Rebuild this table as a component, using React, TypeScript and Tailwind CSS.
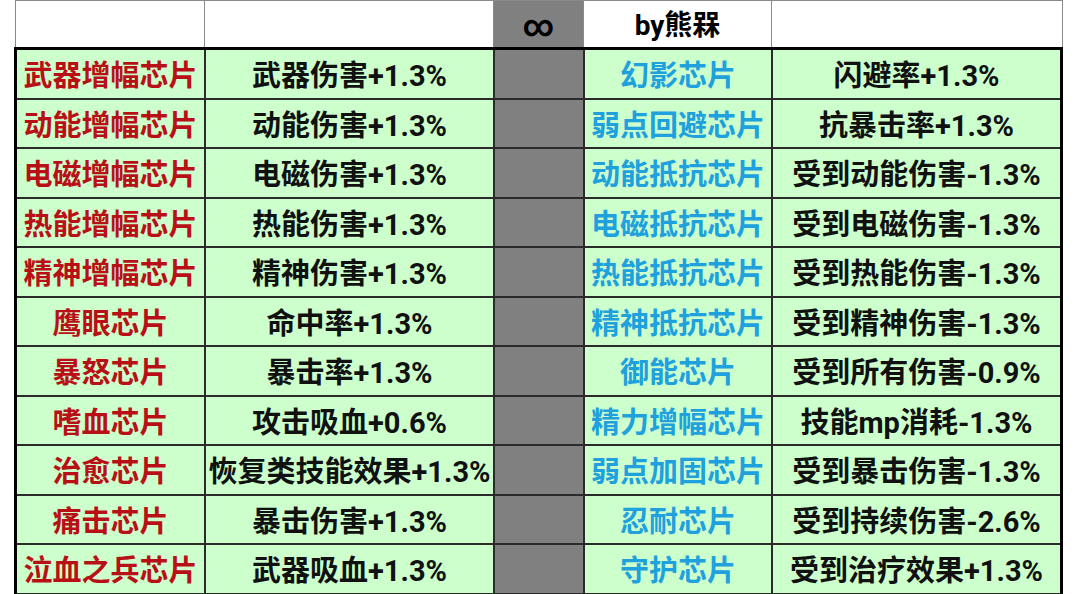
import React from "react";

const rows: [string, string, string, string][] = [
  ["武器增幅芯片", "武器伤害+1.3%", "幻影芯片", "闪避率+1.3%"],
  ["动能增幅芯片", "动能伤害+1.3%", "弱点回避芯片", "抗暴击率+1.3%"],
  ["电磁增幅芯片", "电磁伤害+1.3%", "动能抵抗芯片", "受到动能伤害-1.3%"],
  ["热能增幅芯片", "热能伤害+1.3%", "电磁抵抗芯片", "受到电磁伤害-1.3%"],
  ["精神增幅芯片", "精神伤害+1.3%", "热能抵抗芯片", "受到热能伤害-1.3%"],
  ["鹰眼芯片", "命中率+1.3%", "精神抵抗芯片", "受到精神伤害-1.3%"],
  ["暴怒芯片", "暴击率+1.3%", "御能芯片", "受到所有伤害-0.9%"],
  ["嗜血芯片", "攻击吸血+0.6%", "精力增幅芯片", "技能mp消耗-1.3%"],
  ["治愈芯片", "恢复类技能效果+1.3%", "弱点加固芯片", "受到暴击伤害-1.3%"],
  ["痛击芯片", "暴击伤害+1.3%", "忍耐芯片", "受到持续伤害-2.6%"],
  ["泣血之兵芯片", "武器吸血+1.3%", "守护芯片", "受到治疗效果+1.3%"],
];

const font = { fontFamily: 'Roboto, "Noto Sans CJK SC", sans-serif' };

export default function App() {
  return (
    <div className="w-[1080px] h-[594px] bg-white overflow-hidden" style={font}>
      {/* header */}
      <div className="flex h-[47px] ml-[15px] w-[1048px] border-t border-[#8a8a8a]">
        <div className="w-[190px] border-l border-r border-[#8a8a8a] bg-white" />
        <div className="w-[289px] border-r border-[#8a8a8a] bg-white" />
        <div className="w-[90px] border-r border-[#8a8a8a] bg-[#808080] flex items-center justify-center text-[30px] font-bold text-black leading-none pt-[4px]">
          ∞
        </div>
        <div className="w-[188px] border-r border-[#8a8a8a] bg-white flex items-center justify-center text-[28px] font-bold text-black leading-none pt-[4px]">
          by熊槑
        </div>
        <div className="flex-1 border-r border-[#8a8a8a] bg-white" />
      </div>
      {/* data */}
      <div className="ml-[14px] w-[1049px] border-t-[3px] border-l-[3px] border-r-[3px] border-black">
        {rows.map((r, i) => (
          <div key={i} className="flex h-[49.5px] border-b-2 border-[#2a2a2a] text-[29px] font-bold leading-none">
            <div className="w-[189px] shrink-0 border-r-2 border-[#2a2a2a] bg-[#ccffcc] flex items-center justify-center text-[#b81016] whitespace-nowrap pt-[6px]">
              {r[0]}
            </div>
            <div className="w-[289px] shrink-0 border-r-2 border-[#2a2a2a] bg-[#ccffcc] flex items-center justify-center text-[#111] whitespace-nowrap pt-[6px]">
              {r[1]}
            </div>
            <div className="w-[90px] shrink-0 border-r-2 border-[#2a2a2a] bg-[#808080]" />
            <div className="w-[188px] shrink-0 border-r-2 border-[#2a2a2a] bg-[#ccffcc] flex items-center justify-center text-[#1ea1dc] whitespace-nowrap pt-[6px]">
              {r[2]}
            </div>
            <div className="flex-1 bg-[#ccffcc] flex items-center justify-center text-[#111] whitespace-nowrap pt-[6px]">
              {r[3]}
            </div>
          </div>
        ))}
      </div>
    </div>
  );
}
